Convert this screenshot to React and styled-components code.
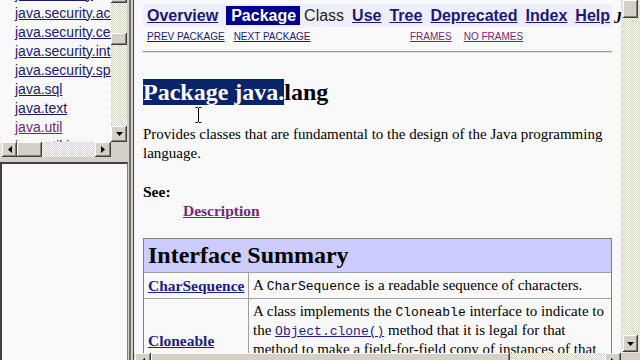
import styled, { createGlobalStyle } from "styled-components"

const SANS = `"Liberation Sans", Arial, sans-serif`
const SERIF = `"Liberation Serif", "Times New Roman", serif`
const MONO = `"Liberation Mono", "Courier New", monospace`

const FACE = "#d4d0c8"
const PAPER = "#f9f9f9"
const NAVY = "#1a1a72"
const VISITED = "#74287a"

const GlobalStyle = createGlobalStyle`
  html, body { margin: 0; padding: 0; }
  body { width: 640px; height: 360px; overflow: hidden; background: ${FACE}; }
  * { box-sizing: border-box; }
`

const packages = [
  { name: "java.security" },
  { name: "java.security.acl" },
  { name: "java.security.cert" },
  { name: "java.security.interfaces" },
  { name: "java.security.spec" },
  { name: "java.sql" },
  { name: "java.text" },
  { name: "java.util", visited: true },
  { name: "java.util.jar" },
  { name: "java.util.logging" },
]

const navItems = [
  { label: "Overview", link: true },
  { label: "Package", current: true },
  { label: "Class" },
  { label: "Use", link: true },
  { label: "Tree", link: true },
  { label: "Deprecated", link: true },
  { label: "Index", link: true },
  { label: "Help", link: true },
]

function Arrow({ dir }) {
  const points = {
    down: "0,0 7,0 3.5,4",
    right: "0,0 4,3.5 0,7",
    left: "4,0 0,3.5 4,7",
  }[dir]
  const vertical = dir === "down"
  return (
    <svg width={vertical ? 7 : 4} height={vertical ? 4 : 7} viewBox={vertical ? "0 0 7 4" : "0 0 4 7"}>
      <polygon points={points} fill="#000" />
    </svg>
  )
}

function IBeam() {
  return (
    <svg width="7" height="16" viewBox="0 0 7 16">
      <path d="M0.5 0.5h2.5M4 0.5h2.5M3.5 1v14M0.5 15.5h2.5M4 15.5h2.5" stroke="#000" strokeWidth="1" fill="none" />
    </svg>
  )
}

export default function App() {
  return (
    <Screen>
      <GlobalStyle />
      <LeftFrame>
        <PackagePane>
          <PaneView>
            <PackageList>
              {packages.map((p) => (
                <li key={p.name}>
                  <PackageLink $visited={p.visited}>{p.name}</PackageLink>
                </li>
              ))}
            </PackageList>
          </PaneView>
          <VScroll>
            <ScrollButton $w="100%" $h="16px" style={{ marginTop: -13 }} />
            <Track $size="30px" />
            <ScrollButton $w="100%" $h="12px" />
            <Track />
            <ScrollButton $w="100%" $h="16px">
              <Arrow dir="down" />
            </ScrollButton>
          </VScroll>
          <HScroll $pad="2px">
            <ScrollButton $w="15px" $h="15px">
              <Arrow dir="left" />
            </ScrollButton>
            <ScrollButton $w="25px" $h="15px" />
            <Track />
            <ScrollButton $w="16px" $h="15px">
              <Arrow dir="right" />
            </ScrollButton>
          </HScroll>
          <Corner />
        </PackagePane>
        <ClassPane />
      </LeftFrame>

      <Splitter />

      <RightFrame>
        <DocView>
          <Doc>
            <NavTable>
              <NavCell>
                {navItems.map((item) => (
                  <NavItem key={item.label} $link={item.link} $current={item.current}>
                    {item.label}
                  </NavItem>
                ))}
              </NavCell>
              <PlatformLabel>
                Java<sup>TM</sup>&nbsp;2&nbsp;Platform Std.&nbsp;Ed. v1.4.2
              </PlatformLabel>
              <SubNav>
                <div>
                  <SubLink>PREV PACKAGE</SubLink>
                  <SubLink>NEXT PACKAGE</SubLink>
                </div>
                <div>
                  <SubLink $visited $gap="12px">FRAMES</SubLink>
                  <SubLink $visited>NO FRAMES</SubLink>
                </div>
              </SubNav>
            </NavTable>

            <Rule />

            <Title>
              <Selection>Package java.</Selection>lang
            </Title>

            <Para>
              Provides classes that are fundamental to the design of the Java programming language.
            </Para>

            <SeeList>
              <dt>See:</dt>
              <dd>
                <DescLink>Description</DescLink>
              </dd>
            </SeeList>

            <SummaryTable>
              <HeaderCell>Interface Summary</HeaderCell>
              <NameCell>
                <NameLink>CharSequence</NameLink>
              </NameCell>
              <DescCell>
                A <Code>CharSequence</Code> is a readable sequence of characters.
              </DescCell>
              <NameCell>
                <NameLink>Cloneable</NameLink>
              </NameCell>
              <DescCell>
                A class implements the <Code>Cloneable</Code> interface to indicate to the{" "}
                <CodeLink>Object.clone()</CodeLink> method that it is legal for that method to make a
                field-for-field copy of instances of that class.
              </DescCell>
            </SummaryTable>
          </Doc>
          <Cursor>
            <IBeam />
          </Cursor>
        </DocView>

        <VScroll $pad="2px">
          <ScrollButton $w="100%" $h="18px" />
          <Track />
          <ScrollButton $w="100%" $h="17px" style={{ marginBottom: 1 }}>
            <Arrow dir="down" />
          </ScrollButton>
        </VScroll>
        <HScroll $pad="1px">
          <ScrollButton $w="16px" $h="16px">
            <Arrow dir="left" />
          </ScrollButton>
          <ScrollButton $w="359px" $h="16px" />
          <Track />
          <ScrollButton $w="16px" $h="16px">
            <Arrow dir="right" />
          </ScrollButton>
        </HScroll>
        <Corner />
      </RightFrame>
    </Screen>
  )
}

const checker = `
  background-color: #ffffff;
  background-image: repeating-conic-gradient(${FACE} 0% 25%, #ffffff 0% 50%);
  background-size: 2px 2px;
`

const Screen = styled.div`
  display: flex;
  width: 640px;
  height: 360px;
  overflow: hidden;
  background: ${FACE};
`
const LeftFrame = styled.div`
  width: 129px;
  flex-shrink: 0;
  display: flex;
  flex-direction: column;
`
const PackagePane = styled.div`
  height: 157px;
  display: grid;
  grid-template-columns: 111px 16px;
  grid-template-rows: 142px 15px;
`
const PaneView = styled.div`
  overflow: hidden;
  background: ${PAPER};
`
const PackageList = styled.ul`
  list-style: none;
  margin: -15.5px 0 0;
  padding: 0 0 0 15px;
  font: 14px/19px ${SANS};
  white-space: nowrap;
`
const PackageLink = styled.a`
  color: ${(p) => (p.$visited ? VISITED : NAVY)};
  text-decoration: underline;
`
const VScroll = styled.div`
  display: flex;
  flex-direction: column;
  overflow: hidden;
  padding: 0 ${(p) => p.$pad || 0};
  ${checker}
`
const HScroll = styled.div`
  display: flex;
  align-items: flex-start;
  overflow: hidden;
  padding-left: ${(p) => p.$pad || 0};
  ${checker}
`
const Track = styled.div`
  flex: ${(p) => (p.$size ? `0 0 ${p.$size}` : "1")};
`
const ScrollButton = styled.div`
  flex: 0 0 auto;
  width: ${(p) => p.$w};
  height: ${(p) => p.$h};
  display: flex;
  align-items: center;
  justify-content: center;
  background: ${FACE};
  box-shadow: inset -1px -1px #404040, inset 1px 1px #ffffff, inset -2px -2px #808080;
`
const Corner = styled.div`
  background: ${FACE};
`
const ClassPane = styled.div`
  flex: 1;
  margin: 5px 1px 0 0;
  background: ${PAPER};
  border-top: 2px solid #404040;
  border-left: 2px solid #404040;
  border-right: 1px solid #808080;
`
const Splitter = styled.div`
  width: 5px;
  flex-shrink: 0;
  background: ${FACE};
  border-left: 2px solid #6e6e6e;
  border-right: 1px solid #404040;
`
const RightFrame = styled.div`
  flex: 1;
  display: grid;
  grid-template-columns: 487px 19px;
  grid-template-rows: 353px 7px;
`
const DocView = styled.div`
  position: relative;
  overflow: hidden;
  background: ${PAPER};
`
const Doc = styled.div`
  padding: 0 9px;
  color: #000;
`
const NavTable = styled.div`
  display: grid;
  grid-template-columns: 469px max-content;
  grid-template-rows: 23px 12px;
  row-gap: 4px;
  column-gap: 2px;
  margin-top: 4px;
`
const NavCell = styled.div`
  grid-row: 1;
  grid-column: 1;
  display: flex;
  align-items: center;
  background: #eeeeff;
`
const NavItem = styled.a`
  font: ${(p) => (p.$link || p.$current ? 700 : 400)} 16px/19px ${SANS};
  color: ${(p) => (p.$current ? "#ffffff" : p.$link ? NAVY : "#222222")};
  background: ${(p) => (p.$current ? "#00008b" : "transparent")};
  padding: 0 4px 0 ${(p) => (p.$current ? 5 : 4)}px;
  margin-left: ${(p) => (p.$current ? 4 : 0)}px;
  text-decoration: ${(p) => (p.$link ? "underline" : "none")};
`
const PlatformLabel = styled.div`
  grid-column: 2;
  grid-row: 1 / 3;
  padding-top: 1px;
  font: italic 700 16px/18px ${SERIF};
  white-space: nowrap;
  sup {
    font-size: 9px;
  }
`
const SubNav = styled.div`
  grid-row: 2;
  grid-column: 1;
  display: grid;
  grid-template-columns: 263px 1fr;
  padding-left: 4px;
  font: 10px/12px ${SANS};
`
const SubLink = styled.a`
  color: ${(p) => (p.$visited ? VISITED : NAVY)};
  text-decoration: underline;
  margin-right: ${(p) => p.$gap || "9px"};
`
const Rule = styled.hr`
  height: 0;
  margin: 8px 0 0;
  border: 0;
  border-top: 1px solid #9a9a9a;
  border-bottom: 1px solid #e4e4e4;
`
const Title = styled.h2`
  margin: 26px 0 0;
  font: 700 24px/27px ${SERIF};
`
const Selection = styled.span`
  background: #0a246a;
  color: #ffffff;
`
const Para = styled.p`
  margin: 19px 0 0;
  font: 15px/19px ${SERIF};
`
const SeeList = styled.dl`
  margin: 19px 0 0;
  font: 700 15.5px/19px ${SERIF};
  dd {
    margin-left: 40px;
  }
`
const DescLink = styled.a`
  color: ${VISITED};
  text-decoration: underline;
`
const SummaryTable = styled.div`
  margin-top: 18px;
  display: grid;
  grid-template-columns: 105px 1fr;
  border: 1px solid #808080;
`
const HeaderCell = styled.div`
  grid-column: 1 / -1;
  padding: 3px 4px;
  background: #ccccff;
  border-bottom: 1px solid #a0a0a0;
  font: 700 24px/27px ${SERIF};
`
const NameCell = styled.div`
  display: flex;
  align-items: center;
  padding: 3px 4px;
  border-right: 1px solid #a0a0a0;
  border-bottom: 1px solid #a0a0a0;
  font: 700 15.5px/19px ${SERIF};
`
const NameLink = styled.a`
  color: #1c1c8c;
  text-decoration: underline;
`
const DescCell = styled.div`
  padding: 3px 3px 3px 4px;
  border-bottom: 1px solid #a0a0a0;
  font: 15px/19px ${SERIF};
`
const Code = styled.code`
  font: 13px ${MONO};
`
const CodeLink = styled(Code).attrs({ as: "a" })`
  color: #1c1c8c;
  text-decoration: underline;
`
const Cursor = styled.div`
  position: absolute;
  left: 61px;
  top: 107px;
  line-height: 0;
`
